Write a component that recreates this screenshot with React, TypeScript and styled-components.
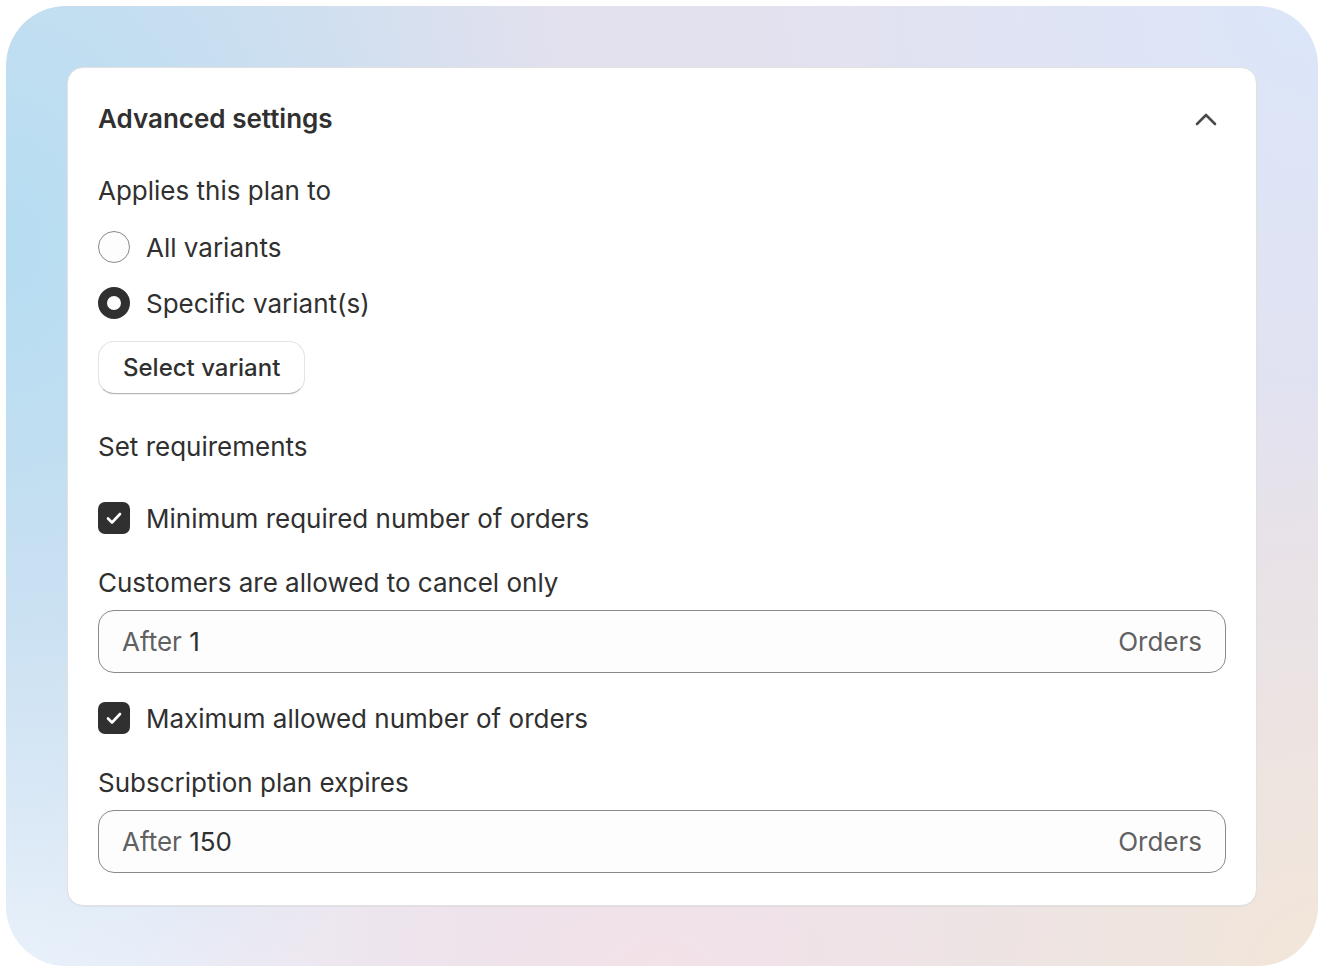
import React from "react";
import styled, { createGlobalStyle } from "styled-components";

const Global = createGlobalStyle`
  html, body { margin: 0; padding: 0; background: #ffffff; }
  body { font-family: Inter, "Noto Sans", "Liberation Sans", sans-serif; color: #303030; -webkit-font-smoothing: antialiased; }
  * { box-sizing: border-box; }
`;

const Frame = styled.div`
  margin: 6px;
  width: 1312px;
  height: 960px;
  border-radius: 60px;
  padding: 61px;
  background:
    radial-gradient(ellipse 45% 85% at 0% 25%, #b6ddf2 0%, rgba(182,221,242,0.6) 45%, rgba(182,221,242,0) 100%),
    radial-gradient(ellipse 45% 60% at 100% 100%, #f3e6d9 0%, rgba(243,230,217,0) 100%),
    radial-gradient(ellipse 40% 35% at 50% 100%, #f3e2e8 0%, rgba(243,226,232,0) 100%),
    radial-gradient(ellipse 45% 55% at 100% 0%, #dbe6f9 0%, rgba(219,230,249,0) 100%),
    radial-gradient(ellipse 45% 55% at 0% 100%, #f0f4fc 0%, rgba(240,244,252,0) 100%),
    #e4e1ee;
`;

const Card = styled.section`
  background: #ffffff;
  border: 1px solid #e1e1e1;
  border-radius: 16px;
  padding: 31px 30px 32px;
  display: flex;
  flex-direction: column;
  box-shadow: 0 1px 0 rgba(0, 0, 0, 0.04);
`;

const Header = styled.div`
  display: flex;
  align-items: center;
  justify-content: space-between;
  height: 40px;
  margin-bottom: 34px;
`;

const Title = styled.h2`
  margin: 0;
  font-size: 26px;
  font-weight: 600;
  line-height: 40px;
  color: #303030;
`;

const IconButton = styled.button`
  border: 0;
  background: transparent;
  padding: 0;
  margin-right: 8px;
  display: flex;
  align-items: center;
  justify-content: center;
  width: 24px;
  height: 24px;
  cursor: pointer;
`;

const Stack = styled.div<{ $gap: number }>`
  display: flex;
  flex-direction: column;
  align-items: flex-start;
  gap: ${(p) => p.$gap}px;
`;

const FullStack = styled(Stack)`
  align-items: stretch;
`;

const Label = styled.div`
  font-size: 26px;
  line-height: 36px;
  font-weight: 400;
  color: #303030;
`;

const ChoiceRow = styled.label`
  display: flex;
  align-items: center;
  gap: 16px;
  height: 36px;
  font-size: 26px;
  color: #303030;
  cursor: pointer;
`;

const RadioDot = styled.span<{ $checked?: boolean }>`
  width: 32px;
  height: 32px;
  border-radius: 50%;
  flex: none;
  background: #fdfdfd;
  border: ${(p) => (p.$checked ? "9px solid #303030" : "1.5px solid #8a8a8a")};
`;

const CheckBox = styled.span`
  width: 32px;
  height: 32px;
  border-radius: 7px;
  flex: none;
  background: #303030;
  display: flex;
  align-items: center;
  justify-content: center;
`;

const Button = styled.button`
  font-family: inherit;
  font-size: 24px;
  font-weight: 550;
  color: #303030;
  background: #ffffff;
  border: 1px solid #e3e3e3;
  border-bottom-color: #b5b5b5;
  border-radius: 16px;
  height: 53px;
  padding: 0 24px;
  box-shadow: 0 1px 0 rgba(0, 0, 0, 0.06);
  cursor: pointer;
`;

const Input = styled.div`
  display: flex;
  align-items: center;
  justify-content: space-between;
  height: 63px;
  padding: 0 23px;
  border: 1.5px solid #8a8a8a;
  border-radius: 16px;
  background: #fdfdfd;
  font-size: 26px;
`;

const Muted = styled.span`
  color: #616161;
`;

const Value = styled.span`
  color: #303030;
`;

const Check = () => (
  <svg width="22" height="22" viewBox="0 0 22 22" fill="none">
    <path d="M5 11.5l4 4L17 7" stroke="#fff" strokeWidth="2.6" strokeLinecap="round" strokeLinejoin="round" />
  </svg>
);

const Chevron = () => (
  <svg width="24" height="16" viewBox="0 0 24 16" fill="none">
    <polyline points="3,13 12,4 21,13" stroke="#4a4a4a" strokeWidth="2.6" strokeLinecap="round" strokeLinejoin="round" />
  </svg>
);

const Field = ({ check, label, value }: { check: string; label: string; value: string }) => (
  <FullStack $gap={29}>
    <ChoiceRow>
      <CheckBox>
        <Check />
      </CheckBox>
      {check}
    </ChoiceRow>
    <FullStack $gap={9}>
      <Label>{label}</Label>
      <Input>
        <span>
          <Muted>After </Muted>
          <Value>{value}</Value>
        </span>
        <Muted>Orders</Muted>
      </Input>
    </FullStack>
  </FullStack>
);

export default function App() {
  return (
    <>
      <Global />
      <Frame>
        <Card>
          <Header>
            <Title>Advanced settings</Title>
            <IconButton aria-label="Collapse">
              <Chevron />
            </IconButton>
          </Header>
          <FullStack $gap={35}>
            <Stack $gap={20}>
              <Label>Applies this plan to</Label>
              <ChoiceRow>
                <RadioDot />
                All variants
              </ChoiceRow>
              <ChoiceRow>
                <RadioDot $checked />
                Specific variant(s)
              </ChoiceRow>
              <Button>Select variant</Button>
            </Stack>
            <Label>Set requirements</Label>
            <FullStack $gap={27}>
              <Field check="Minimum required number of orders" label="Customers are allowed to cancel only" value="1" />
              <Field check="Maximum allowed number of orders" label="Subscription plan expires" value="150" />
            </FullStack>
          </FullStack>
        </Card>
      </Frame>
    </>
  );
}
